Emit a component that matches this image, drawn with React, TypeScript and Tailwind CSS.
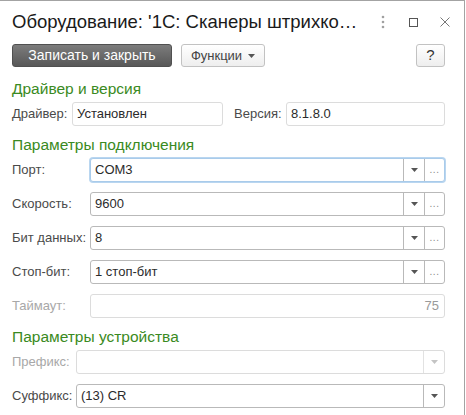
import React from "react";

const Arrow = ({ light }: { light?: boolean }) => (
  <svg width="7" height="4" viewBox="0 0 7 4" className="block">
    <path d="M0 0H7L3.5 4Z" fill={light ? "#c4c4c4" : "#555"} />
  </svg>
);

const Dots = () => (
  <span className="text-[10px] leading-none text-[#8a8a8a] tracking-[0.5px]">...</span>
);

function Field({
  value,
  focused,
  dropdown,
  dots,
  disabled,
  readOnly,
  className = "",
}: {
  value?: string;
  focused?: boolean;
  dropdown?: boolean;
  dots?: boolean;
  disabled?: boolean;
  readOnly?: boolean;
  className?: string;
}) {
  const border = focused
    ? "border-[#a9cbea] shadow-[0_0_0_1px_#b9d6f0]"
    : disabled || readOnly
    ? "border-[#dcdcdc]"
    : "border-[#b9b9b9]";
  const sep = disabled ? "border-[#e2e2e2]" : "border-[#b9b9b9]";
  return (
    <div className={`h-[24px] flex items-stretch rounded-[3px] border bg-white ${border} ${className}`}>
      <div
        className={`flex-1 flex items-center px-[4px] text-[13px] ${
          disabled ? "text-[#9a9a9a] justify-end pr-[5px]" : "text-[#2b2b2b]"
        }`}
      >
        {value}
      </div>
      {dropdown && (
        <div className={`w-[21px] flex items-center justify-center border-l ${sep}`}>
          <Arrow light={disabled} />
        </div>
      )}
      {dots && (
        <div className={`w-[20px] flex items-end justify-center pb-[6px] border-l ${sep}`}>
          <Dots />
        </div>
      )}
    </div>
  );
}

function Row({
  label,
  labelW,
  disabledLabel,
  children,
}: {
  label: string;
  labelW: string;
  disabledLabel?: boolean;
  children: React.ReactNode;
}) {
  return (
    <div className="flex items-center h-[24px]">
      <div
        className={`${labelW} shrink-0 text-[13px] ${
          disabledLabel ? "text-[#a8a8a8]" : "text-[#4a4a4a]"
        }`}
      >
        {label}
      </div>
      {children}
    </div>
  );
}

const Header = ({ children, className = "" }: { children: React.ReactNode; className?: string }) => (
  <div className={`text-[15.5px] leading-[18px] text-[#3a8a22] ${className}`}>{children}</div>
);

export default function App() {
  return (
    <div className="w-[466px] h-[415px] bg-white overflow-hidden font-['Liberation_Sans',Arial,sans-serif]">
      <div className="w-[465px] h-[415px] border-t border-r border-[#a3a3a3] flex flex-col">
        {/* title */}
        <div className="h-[42px] flex items-center pl-[12px] pr-[14px] shrink-0">
          <div className="flex-1 text-[18.5px] text-[#1a1a1a] whitespace-nowrap">
            Оборудование: '1С: Сканеры штрихко…
          </div>
          <div className="flex items-center">
            <svg width="4" height="14" viewBox="0 0 4 14" className="mr-[24px]">
              <circle cx="2" cy="2" r="1.3" fill="#a0a0a0" />
              <circle cx="2" cy="7" r="1.3" fill="#a0a0a0" />
              <circle cx="2" cy="12" r="1.3" fill="#a0a0a0" />
            </svg>
            <svg width="9" height="9" viewBox="0 0 9 9" className="mr-[22px]">
              <rect x="0.5" y="0.5" width="8" height="8" fill="none" stroke="#555" />
            </svg>
            <svg width="10" height="10" viewBox="0 0 10 10">
              <path d="M0.5 0.5L9.5 9.5M9.5 0.5L0.5 9.5" stroke="#777" strokeWidth="1" />
            </svg>
          </div>
        </div>

        {/* toolbar */}
        <div className="h-[23px] mt-[1px] flex items-center pl-[12px] pr-[19px] shrink-0">
          <div className="h-[23px] w-[160px] rounded-[3px] border border-[#505050] bg-gradient-to-b from-[#7c7c7c] to-[#585858] flex items-center justify-center text-white text-[14px]">
            Записать и закрыть
          </div>
          <div className="ml-[9px] h-[23px] w-[84px] rounded-[3px] border border-[#c2c2c2] bg-gradient-to-b from-white to-[#eeeeee] flex items-center justify-center text-[#444] text-[13px]">
            Функции
            <span className="ml-[6px]">
              <Arrow />
            </span>
          </div>
          <div className="flex-1" />
          <div className="h-[23px] w-[29px] rounded-[3px] border border-[#c2c2c2] bg-gradient-to-b from-white to-[#eeeeee] flex items-center justify-center text-[#333] text-[15px]">
            ?
          </div>
        </div>

        <div className="pl-[12px] pr-[19px]">
          <Header className="mt-[13px]">Драйвер и версия</Header>
          <div className="mt-[4px] flex items-center h-[24px]">
            <div className="w-[60px] text-[13px] text-[#4a4a4a] shrink-0">Драйвер:</div>
            <Field value="Установлен" readOnly className="w-[151px]" />
            <div className="ml-[11px] w-[52px] text-[13px] text-[#4a4a4a] shrink-0">Версия:</div>
            <Field value="8.1.8.0" readOnly className="flex-1" />
          </div>

          <Header className="mt-[10px]">Параметры подключения</Header>
          <div className="mt-[4px] flex flex-col gap-[10px]">
            <Row label="Порт:" labelW="w-[78px]">
              <Field value="COM3" focused dropdown dots className="flex-1" />
            </Row>
            <Row label="Скорость:" labelW="w-[78px]">
              <Field value="9600" dropdown dots className="flex-1" />
            </Row>
            <Row label="Бит данных:" labelW="w-[78px]">
              <Field value="8" dropdown dots className="flex-1" />
            </Row>
            <Row label="Стоп-бит:" labelW="w-[78px]">
              <Field value="1 стоп-бит" dropdown dots className="flex-1" />
            </Row>
            <Row label="Таймаут:" labelW="w-[78px]" disabledLabel>
              <Field value="75" disabled className="flex-1" />
            </Row>
          </div>

          <Header className="mt-[10px]">Параметры устройства</Header>
          <div className="mt-[4px] flex flex-col gap-[10px]">
            <Row label="Префикс:" labelW="w-[64px]" disabledLabel>
              <Field disabled dropdown className="flex-1" />
            </Row>
            <Row label="Суффикс:" labelW="w-[64px]">
              <Field value="(13) CR" dropdown className="flex-1" />
            </Row>
          </div>
        </div>
      </div>
    </div>
  );
}
